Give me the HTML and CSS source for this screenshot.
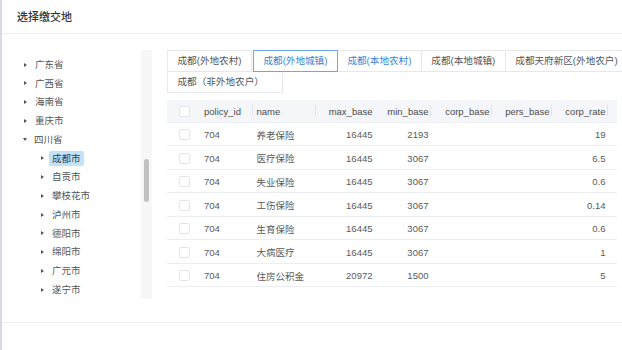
FILE: index.html
```html
<!DOCTYPE html>
<html lang="zh">
<head>
<meta charset="utf-8">
<title>选择缴交地</title>
<link rel="stylesheet" href="styles.css">
</head>
<body>
<div class="modal">
  <div class="header"><span class="title">选择缴交地</span></div>
  <div class="body">
    <div class="tree-pane">
      <div class="tree-scroll">
        <div class="tree-list">
          <div class="node l1"><i class="caret"></i><span class="label">湖南省</span></div>
          <div class="node l1"><i class="caret"></i><span class="label">广东省</span></div>
          <div class="node l1"><i class="caret"></i><span class="label">广西省</span></div>
          <div class="node l1"><i class="caret"></i><span class="label">海南省</span></div>
          <div class="node l1"><i class="caret"></i><span class="label">重庆市</span></div>
          <div class="node l1"><i class="caret open"></i><span class="label">四川省</span></div>
          <div class="node l2"><i class="caret"></i><span class="label selected">成都市</span></div>
          <div class="node l2"><i class="caret"></i><span class="label">自贡市</span></div>
          <div class="node l2"><i class="caret"></i><span class="label">攀枝花市</span></div>
          <div class="node l2"><i class="caret"></i><span class="label">泸州市</span></div>
          <div class="node l2"><i class="caret"></i><span class="label">德阳市</span></div>
          <div class="node l2"><i class="caret"></i><span class="label">绵阳市</span></div>
          <div class="node l2"><i class="caret"></i><span class="label">广元市</span></div>
          <div class="node l2"><i class="caret"></i><span class="label">遂宁市</span></div>
        </div>
      </div>
      <div class="track"><div class="thumb"></div></div>
    </div>
    <div class="content">
      <div class="tabs">
        <span class="tab">成都(外地农村)</span>
        <span class="tab active">成都(外地城镇)</span>
        <span class="tab hover">成都(本地农村)</span>
        <span class="tab">成都(本地城镇)</span>
        <span class="tab">成都天府新区(外地农户)</span>
        <span class="tab trail">成都（非外地农户）</span>
      </div>
      <div class="table">
        <div class="row head">
          <div class="cell cb"><i class="box"></i></div>
          <div class="cell left sep pid">policy_id</div>
          <div class="cell left sep nm">name</div>
          <div class="cell num">max_base</div>
          <div class="cell num sep">min_base</div>
          <div class="cell num sep">corp_base</div>
          <div class="cell num sep">pers_base</div>
          <div class="cell num sep">corp_rate</div>
          <div class="cell"></div>
        </div>
        <div class="row">
          <div class="cell cb"><i class="box"></i></div>
          <div class="cell left pid">704</div><div class="cell left nm">养老保险</div>
          <div class="cell num">16445</div><div class="cell num">2193</div>
          <div class="cell num"></div><div class="cell num"></div><div class="cell num">19</div><div class="cell"></div>
        </div>
        <div class="row">
          <div class="cell cb"><i class="box"></i></div>
          <div class="cell left pid">704</div><div class="cell left nm">医疗保险</div>
          <div class="cell num">16445</div><div class="cell num">3067</div>
          <div class="cell num"></div><div class="cell num"></div><div class="cell num">6.5</div><div class="cell"></div>
        </div>
        <div class="row">
          <div class="cell cb"><i class="box"></i></div>
          <div class="cell left pid">704</div><div class="cell left nm">失业保险</div>
          <div class="cell num">16445</div><div class="cell num">3067</div>
          <div class="cell num"></div><div class="cell num"></div><div class="cell num">0.6</div><div class="cell"></div>
        </div>
        <div class="row">
          <div class="cell cb"><i class="box"></i></div>
          <div class="cell left pid">704</div><div class="cell left nm">工伤保险</div>
          <div class="cell num">16445</div><div class="cell num">3067</div>
          <div class="cell num"></div><div class="cell num"></div><div class="cell num">0.14</div><div class="cell"></div>
        </div>
        <div class="row">
          <div class="cell cb"><i class="box"></i></div>
          <div class="cell left pid">704</div><div class="cell left nm">生育保险</div>
          <div class="cell num">16445</div><div class="cell num">3067</div>
          <div class="cell num"></div><div class="cell num"></div><div class="cell num">0.6</div><div class="cell"></div>
        </div>
        <div class="row">
          <div class="cell cb"><i class="box"></i></div>
          <div class="cell left pid">704</div><div class="cell left nm">大病医疗</div>
          <div class="cell num">16445</div><div class="cell num">3067</div>
          <div class="cell num"></div><div class="cell num"></div><div class="cell num">1</div><div class="cell"></div>
        </div>
        <div class="row">
          <div class="cell cb"><i class="box"></i></div>
          <div class="cell left pid">704</div><div class="cell left nm">住房公积金</div>
          <div class="cell num">20972</div><div class="cell num">1500</div>
          <div class="cell num"></div><div class="cell num"></div><div class="cell num">5</div><div class="cell"></div>
        </div>
      </div>
    </div>
  </div>
  <div class="footer"></div>
</div>
</body>
</html>
```

FILE: styles.css
```css
* { box-sizing: border-box; }
html, body { margin: 0; padding: 0; background: #fff; }
body {
  font-family: "Liberation Sans", "Noto Sans CJK SC", sans-serif;
  font-size: 9.5px;
  color: #5a5a5a;
}
.modal {
  width: 622px;
  height: 350px;
  border-left: 2px solid #d9d9e0;
  overflow: hidden;
  background: #fff;
}
.header {
  height: 34px;
  border-bottom: 1px solid #eeeeee;
  padding-left: 15px;
  display: flex;
  align-items: center;
}
.title {
  font-size: 11px;
  color: #333;
  font-weight: 500;
  margin-top: -2px;
}
.body {
  display: flex;
  height: 288px;
}
.tree-pane {
  width: 150px;
  display: flex;
  flex: none;
}
.tree-scroll {
  flex: 1;
  margin-top: 17px;
  height: 248px;
  overflow: hidden;
}
.tree-list { margin-top: -14.6px; }
.node {
  height: 18.75px;
  display: flex;
  align-items: center;
  color: #555;
}
.node.l1 { padding-left: 21.5px; }
.node.l2 { padding-left: 38.5px; }
.caret {
  width: 0;
  height: 0;
  border-left: 3px solid #555;
  border-top: 2.5px solid transparent;
  border-bottom: 2.5px solid transparent;
  margin-right: 5.5px;
}
.caret.open {
  border-left: 2.5px solid transparent;
  border-right: 2.5px solid transparent;
  border-top: 3px solid #555;
  border-bottom: 0;
  margin-left: -1px;
  margin-right: 4.5px;
}
.label {
  padding: 0 3px;
  line-height: 15.5px;
  border-radius: 2px;
}
.label.selected { background: #c2e2fa; color: #3a3a3a; }
.track {
  width: 11px;
  margin-top: 16px;
  height: 249px;
  background: #f7f7f7;
  padding-left: 3px;
  padding-top: 109px;
}
.thumb {
  width: 5px;
  height: 43px;
  border-radius: 3px;
  background: #c1c1c1;
}
.content {
  padding-left: 15px;
  padding-top: 15.5px;
  flex: none;
  width: 480px;
}
.tabs {
  display: flex;
  flex-wrap: wrap;
  width: 475px;
}
.tab {
  height: 22px;
  line-height: 20px;
  padding: 0 9.5px;
  border: 1px solid #e6e8ec;
  margin-right: -1px;
  margin-bottom: -1px;
  white-space: nowrap;
  color: #555;
  background: #fff;
  font-size: 9.6px;
}
.tab.trail { padding-right: 18px; }
.tab.active {
  border-color: #6aa8e8;
  color: #3b82d8;
  margin-left: 2px;
  position: relative;
  z-index: 1;
}
.tab.hover { color: #3b82d8; }
.table {
  margin-top: 8.4px;
  width: 450px;
}
.row {
  display: grid;
  grid-template-columns: 28px 58px 63px 59px 56px 61px 60px 56px 9px;
  height: 23.5px;
  border-bottom: 1px solid #eceef2;
  align-items: center;
  padding-top: 1.5px;
}
.row.head {
  height: 23px;
  background: #f5f6f9;
  border-bottom: 1px solid #eef0f4;
  color: #4a4a4a;
  padding-top: 0.5px;
}
.cell {
  height: 100%;
  display: flex;
  align-items: center;
  white-space: nowrap;
  position: relative;
}
.cell.cb { padding-left: 12px; }
.box {
  width: 11px;
  height: 11px;
  border: 1px solid #e3e5ea;
  border-radius: 2px;
  background: #fff;
}
.cell.pid { padding-left: 9px; }
.cell.nm { padding-left: 3.5px; }
.cell.num { justify-content: flex-end; padding-right: 2.5px; }
.cell.sep::after {
  content: "";
  position: absolute;
  right: 0;
  top: 5px;
  height: 11px;
  width: 1px;
  background: #e2e4e8;
}
.footer {
  border-top: 1px solid #eeeeee;
  height: 28px;
}
```
